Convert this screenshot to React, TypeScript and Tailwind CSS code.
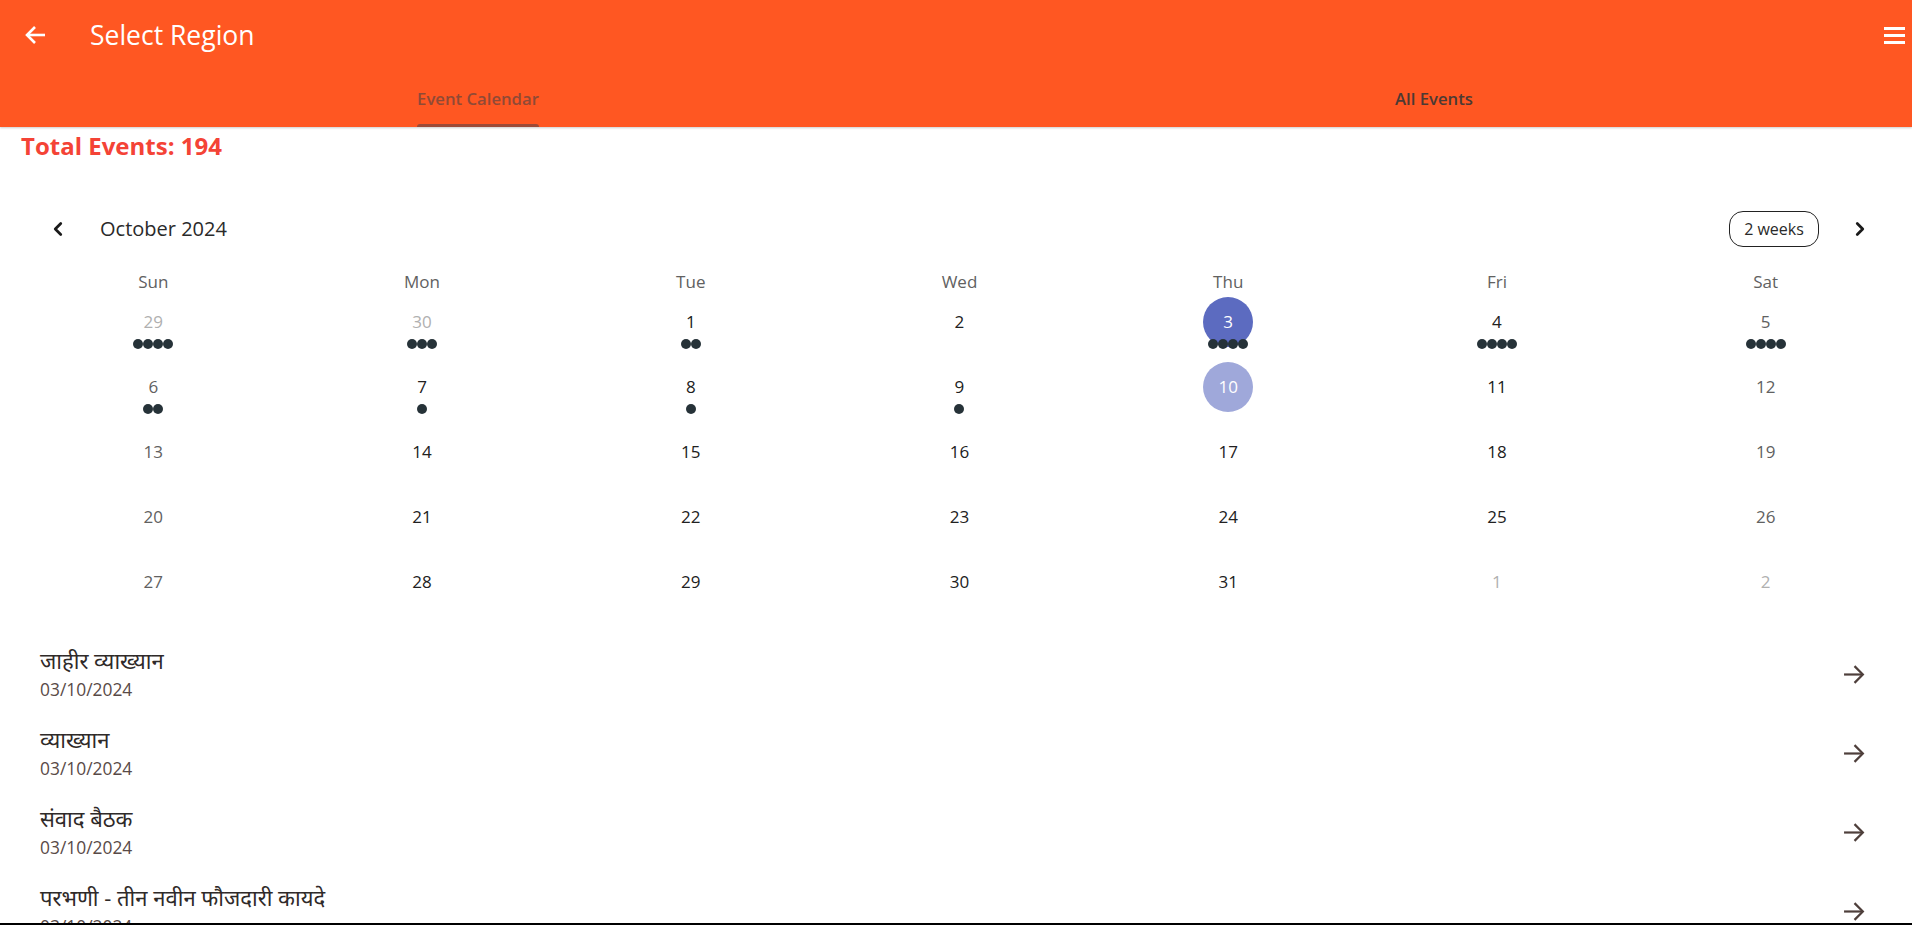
import { ChevronLeft, ChevronRight } from "lucide-react";

type Day = {
  n: number;
  dots: number;
  out?: boolean;
  weekend?: boolean;
  sel?: "today" | "pick";
};

const weeks: Day[][] = [
  [
    { n: 29, dots: 4, out: true },
    { n: 30, dots: 3, out: true },
    { n: 1, dots: 2 },
    { n: 2, dots: 0 },
    { n: 3, dots: 4, sel: "today" },
    { n: 4, dots: 4 },
    { n: 5, dots: 4, weekend: true },
  ],
  [
    { n: 6, dots: 2, weekend: true },
    { n: 7, dots: 1 },
    { n: 8, dots: 1 },
    { n: 9, dots: 1 },
    { n: 10, dots: 0, sel: "pick" },
    { n: 11, dots: 0 },
    { n: 12, dots: 0, weekend: true },
  ],
  [13, 14, 15, 16, 17, 18, 19].map((n, i) => ({ n, dots: 0, weekend: i === 0 || i === 6 })),
  [20, 21, 22, 23, 24, 25, 26].map((n, i) => ({ n, dots: 0, weekend: i === 0 || i === 6 })),
  [
    { n: 27, dots: 0, weekend: true },
    { n: 28, dots: 0 },
    { n: 29, dots: 0 },
    { n: 30, dots: 0 },
    { n: 31, dots: 0 },
    { n: 1, dots: 0, out: true },
    { n: 2, dots: 0, out: true },
  ],
];

const dayNames = ["Sun", "Mon", "Tue", "Wed", "Thu", "Fri", "Sat"];

const events = [
  { title: "जाहीर व्याख्यान", date: "03/10/2024" },
  { title: "व्याख्यान", date: "03/10/2024" },
  { title: "संवाद बैठक", date: "03/10/2024" },
  { title: "परभणी - तीन नवीन फौजदारी कायदे", date: "03/10/2024" },
];

function DayCell({ day }: { day: Day }) {
  let circle = "";
  let color = "text-[#212121]";
  if (day.out) color = "text-[#b0b0b0]";
  else if (day.weekend) color = "text-[#616161]";
  if (day.sel === "today") {
    circle = "bg-[#5c6bc0]";
    color = "text-white";
  } else if (day.sel === "pick") {
    circle = "bg-[#9fa8da]";
    color = "text-white";
  }
  return (
    <div className="h-[65px] flex flex-col items-center pt-[3px]">
      <div
        className={`w-[50px] h-[50px] rounded-full flex items-center justify-center text-[17px] ${circle} ${color}`}
      >
        {day.n}
      </div>
      {day.dots > 0 && (
        <div className="relative -mt-[8px] flex">
          {Array.from({ length: day.dots }).map((_, i) => (
            <span key={i} className="w-[10px] h-[10px] rounded-full bg-[#263238]" />
          ))}
        </div>
      )}
    </div>
  );
}

function ArrowIcon() {
  return (
    <svg width="23" height="21" viewBox="0 0 22 20" fill="none" stroke="#4e3f3b" strokeWidth="2.1">
      <path d="M1 10h18" />
      <path d="M11 2l8 8-8 8" />
    </svg>
  );
}

export default function App() {
  return (
    <div className="h-[927px] w-full overflow-hidden bg-white font-['Open_Sans','Noto_Sans','Noto_Sans_Devanagari',sans-serif]">
      <div className="h-[923px] overflow-hidden flex flex-col">
        {/* app bar */}
        <div className="bg-[#ff5722] shrink-0 shadow-[0_1px_2px_rgba(0,0,0,0.2)]">
          <div className="h-[70px] flex items-center">
            <div className="w-[90px] pl-[24px]">
              <svg width="22" height="20" viewBox="0 0 22 20" fill="none" stroke="white" strokeWidth="2.6">
                <path d="M21 10H3" />
                <path d="M11 2l-8 8 8 8" />
              </svg>
            </div>
            <p className="text-white text-[26.5px] leading-none flex-1">Select Region</p>
            <div className="pr-[7px] flex flex-col gap-[4px]">
              <span className="block w-[21px] h-[3px] bg-white" />
              <span className="block w-[21px] h-[3px] bg-white" />
              <span className="block w-[21px] h-[3px] bg-white" />
            </div>
          </div>
          <div className="h-[57px] flex">
            <div className="w-1/2 flex justify-center">
              <div className="flex flex-col items-center">
                <p className="h-[54px] flex items-center pt-[3px] text-[16.7px] font-semibold text-[#8f4a36]">
                  Event Calendar
                </p>
                <span className="block w-full h-[3px] rounded-t-[3px] bg-[#9c4a37]" />
              </div>
            </div>
            <div className="w-1/2 flex justify-center">
              <p className="h-[54px] flex items-center pt-[3px] text-[16.7px] font-semibold text-[#4b3a34]">
                All Events
              </p>
            </div>
          </div>
        </div>

        <p className="pt-[5px] px-[21px] text-[24px] leading-[28px] font-bold text-[#f44336]">
          Total Events: 194
        </p>

        {/* calendar header */}
        <div className="mt-[51px] h-[40px] flex items-center">
          <div className="w-[28px] ml-[44px] flex justify-center">
            <ChevronLeft size={22} strokeWidth={3} color="#1a1a1a" />
          </div>
          <p className="ml-[28px] text-[20px] text-[#2a2a2a] flex-1">October 2024</p>
          <div className="w-[90px] h-[36px] rounded-[14px] border border-[#222] flex items-center justify-center text-[16px] text-[#2a2a2a]">
            2 weeks
          </div>
          <div className="w-[28px] ml-[27px] mr-[38px] flex justify-center">
            <ChevronRight size={22} strokeWidth={3} color="#1a1a1a" />
          </div>
        </div>

        <div className="pl-[19px] pr-[12px]">
          <div className="mt-[23px] h-[24px] grid grid-cols-7">
            {dayNames.map((d) => (
              <p key={d} className="text-center text-[17px] leading-[24px] text-[#616161]">
                {d}
              </p>
            ))}
          </div>
          {weeks.map((w, wi) => (
            <div key={wi} className="grid grid-cols-7">
              {w.map((d, di) => (
                <DayCell key={di} day={d} />
              ))}
            </div>
          ))}
        </div>

        {/* events */}
        <div className="mt-[14px]">
          {events.map((e, i) => (
            <div key={i} className="flex items-center pl-[40px] pr-[46px] pt-[13px] pb-[10px]">
              <div className="flex-1">
                <p className="text-[22px] leading-[28px] text-[#2f2a29]">{e.title}</p>
                <p className="mt-[2px] text-[17.4px] leading-[26px] text-[#594a47]">{e.date}</p>
              </div>
              <ArrowIcon />
            </div>
          ))}
        </div>
      </div>
      <div className="h-[2px] bg-black" />
    </div>
  );
}
